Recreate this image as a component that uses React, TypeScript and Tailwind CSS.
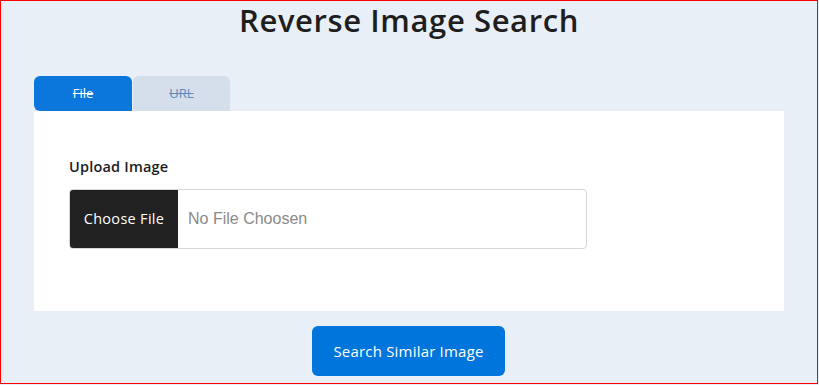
import React from 'react';

const App = () => {
  return (
    <div className="w-[819px] h-[385px] bg-[#e9eff7]">
      <div className="w-[818px] h-[384px] border border-[#ff0000] flex flex-col items-center font-['Open_Sans',sans-serif]">
        <h1 className="mt-[1px] text-[31px] leading-[36px] font-semibold text-[#1e1e1e] tracking-[0.6px]">
          Reverse Image Search
        </h1>

        {/* Tabs */}
        <div className="mt-[38px] self-start ml-[33px] flex">
          <button className="w-[98px] h-[35px] rounded-t-md rounded-bl-md bg-[#0b76dc] text-white text-[13px] font-medium line-through">
            File
          </button>
          <button className="ml-[1px] w-[97px] h-[35px] rounded-t-md bg-[#d4dfeb] text-[#5f89b7] text-[13px] font-medium line-through">
            URL
          </button>
        </div>

        {/* Card */}
        <div className="self-start ml-[33px] w-[750px] h-[200px] bg-white px-[35px] pt-[46px]">
          <label className="block text-[14.5px] font-semibold text-[#1c1c1c] leading-[20px] tracking-[0.2px]">Upload Image</label>
          <div className="mt-[12px] w-[518px] h-[60px] flex border border-[#d6d6dc] rounded-[4px] overflow-hidden">
            <div className="w-[108px] bg-[#212121] text-white text-[14.5px] tracking-[0.3px] flex items-center justify-center">
              Choose File
            </div>
            <div className="flex items-center pl-[10px] text-[16px] text-[#8a8a8a] font-['Liberation_Sans',sans-serif]">
              No File Choosen
            </div>
          </div>
        </div>

        <button className="mt-[15px] -ml-[1px] w-[193px] h-[50px] rounded-md bg-[#0075dc] text-white text-[15px] tracking-[0.2px]">
          Search Similar Image
        </button>
      </div>
    </div>
  );
};

export default App;
